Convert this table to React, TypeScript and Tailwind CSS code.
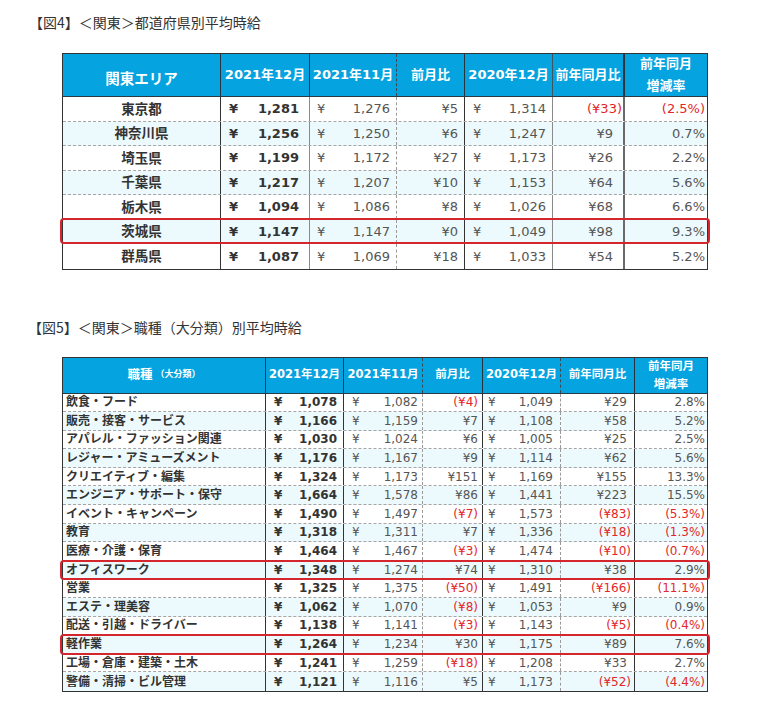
import React from "react";

type Row = {
  name: string;
  a: string;
  b: string;
  c: string;
  d: string;
  e: string;
  f: string;
  hl?: boolean;
};

const t1: Row[] = [
  { name: "東京都", a: "1,281", b: "1,276", c: "¥5", d: "1,314", e: "(¥33)", f: "(2.5%)" },
  { name: "神奈川県", a: "1,256", b: "1,250", c: "¥6", d: "1,247", e: "¥9", f: "0.7%" },
  { name: "埼玉県", a: "1,199", b: "1,172", c: "¥27", d: "1,173", e: "¥26", f: "2.2%" },
  { name: "千葉県", a: "1,217", b: "1,207", c: "¥10", d: "1,153", e: "¥64", f: "5.6%" },
  { name: "栃木県", a: "1,094", b: "1,086", c: "¥8", d: "1,026", e: "¥68", f: "6.6%" },
  { name: "茨城県", a: "1,147", b: "1,147", c: "¥0", d: "1,049", e: "¥98", f: "9.3%", hl: true },
  { name: "群馬県", a: "1,087", b: "1,069", c: "¥18", d: "1,033", e: "¥54", f: "5.2%" },
];

const t2: Row[] = [
  { name: "飲食・フード", a: "1,078", b: "1,082", c: "(¥4)", d: "1,049", e: "¥29", f: "2.8%" },
  { name: "販売・接客・サービス", a: "1,166", b: "1,159", c: "¥7", d: "1,108", e: "¥58", f: "5.2%" },
  { name: "アパレル・ファッション関連", a: "1,030", b: "1,024", c: "¥6", d: "1,005", e: "¥25", f: "2.5%" },
  { name: "レジャー・アミューズメント", a: "1,176", b: "1,167", c: "¥9", d: "1,114", e: "¥62", f: "5.6%" },
  { name: "クリエイティブ・編集", a: "1,324", b: "1,173", c: "¥151", d: "1,169", e: "¥155", f: "13.3%" },
  { name: "エンジニア・サポート・保守", a: "1,664", b: "1,578", c: "¥86", d: "1,441", e: "¥223", f: "15.5%" },
  { name: "イベント・キャンペーン", a: "1,490", b: "1,497", c: "(¥7)", d: "1,573", e: "(¥83)", f: "(5.3%)" },
  { name: "教育", a: "1,318", b: "1,311", c: "¥7", d: "1,336", e: "(¥18)", f: "(1.3%)" },
  { name: "医療・介護・保育", a: "1,464", b: "1,467", c: "(¥3)", d: "1,474", e: "(¥10)", f: "(0.7%)" },
  { name: "オフィスワーク", a: "1,348", b: "1,274", c: "¥74", d: "1,310", e: "¥38", f: "2.9%", hl: true },
  { name: "営業", a: "1,325", b: "1,375", c: "(¥50)", d: "1,491", e: "(¥166)", f: "(11.1%)" },
  { name: "エステ・理美容", a: "1,062", b: "1,070", c: "(¥8)", d: "1,053", e: "¥9", f: "0.9%" },
  { name: "配送・引越・ドライバー", a: "1,138", b: "1,141", c: "(¥3)", d: "1,143", e: "(¥5)", f: "(0.4%)" },
  { name: "軽作業", a: "1,264", b: "1,234", c: "¥30", d: "1,175", e: "¥89", f: "7.6%", hl: true },
  { name: "工場・倉庫・建築・土木", a: "1,241", b: "1,259", c: "(¥18)", d: "1,208", e: "¥33", f: "2.7%" },
  { name: "警備・清掃・ビル管理", a: "1,121", b: "1,116", c: "¥5", d: "1,173", e: "(¥52)", f: "(4.4%)" },
];

const neg = (s: string) => s.startsWith("(");

function Table1() {
  return (
    <div className="ml-[62px] mt-[22px] w-[646px] border border-[#333]">
      <div className="flex h-[43px] border-b border-[#2a3a44] bg-[#05a3df] font-bold text-white">
        <div className="flex w-[158px] items-end justify-center border-r border-[#26343c] pb-[5px] text-[14.5px]">
          関東エリア
        </div>
        <div className="flex w-[89px] items-center justify-center border-r border-[#26343c] text-[13px]">
          2021年12月
        </div>
        <div className="flex w-[87px] items-center justify-center border-r border-dashed border-[#3a4a52] text-[13px]">
          2021年11月
        </div>
        <div className="flex w-[68px] items-center justify-center border-r border-[#26343c] text-[13px]">
          前月比
        </div>
        <div className="flex w-[88px] items-center justify-center border-r border-[#3d5560] text-[13px]">
          2020年12月
        </div>
        <div className="flex w-[72px] items-center justify-center border-r-2 border-[#26343c] text-[13px]">
          前年同月比
        </div>
        <div className="flex w-[82px] flex-col items-center justify-center text-[13px] leading-[22px]">
          <span>前年同月</span>
          <span>増減率</span>
        </div>
      </div>
      {t1.map((r, i) => (
        <div
          key={r.name}
          className={`relative flex h-[24.5px] ${i < t1.length - 1 ? "border-b border-dashed border-[#a5a5a5]" : ""} ${i % 2 === 1 ? "bg-[#ecfafd]" : "bg-white"}`}
        >
          <div className="flex w-[158px] items-center justify-center border-r border-[#333] text-[13.5px] font-bold text-[#333]">
            {r.name}
          </div>
          <div className="flex w-[89px] items-center justify-between border-r border-[#8a8a8a] pl-[8px] pr-[10px] text-[13px] font-bold text-[#333]">
            <span>¥</span>
            <span>{r.a}</span>
          </div>
          <div className="flex w-[87px] items-center justify-between border-r border-dashed border-[#9a9a9a] pl-[7px] pr-[6px] text-[13px] text-[#555]">
            <span>¥</span>
            <span>{r.b}</span>
          </div>
          <div className="flex w-[68px] items-center justify-end border-r border-[#333] pr-[6px] text-[13px] text-[#555]">
            {r.c}
          </div>
          <div className="flex w-[88px] items-center justify-between border-r border-[#8a8a8a] pl-[8px] pr-[6px] text-[13px] text-[#555]">
            <span>¥</span>
            <span>{r.d}</span>
          </div>
          <div
            className={`flex w-[72px] items-center justify-end border-r-2 border-[#6a6a6a] text-[13px] ${neg(r.e) ? "pr-[1px] text-[#e3262a]" : "pr-[10px] text-[#555]"}`}
          >
            {r.e}
          </div>
          <div
            className={`flex w-[82px] items-center justify-end pr-[2px] text-[13px] ${neg(r.f) ? "text-[#e3262a]" : "text-[#555]"}`}
          >
            {r.f}
          </div>
          {r.hl && (
            <div className="pointer-events-none absolute -bottom-[1px] -left-[3px] -right-[3px] -top-[2px] z-10 rounded-[4px] border-2 border-[#d6262d]" />
          )}
        </div>
      ))}
    </div>
  );
}

function Table2() {
  return (
    <div className="ml-[62px] mt-[21px] w-[646px] border border-[#333]">
      <div className="flex h-[36px] border-b border-[#2a3a44] bg-[#05a3df] font-bold text-white">
        <div className="flex w-[203px] items-center justify-center border-r border-[#26343c] text-[12.5px]">
          <span>職種</span>
          <span className="ml-[3px] text-[9px]">（大分類）</span>
        </div>
        <div className="flex w-[78px] items-center justify-center border-r border-[#26343c] text-[11.5px]">
          2021年12月
        </div>
        <div className="flex w-[79px] items-center justify-center border-r border-dashed border-[#3a4a52] text-[11.5px]">
          2021年11月
        </div>
        <div className="flex w-[60px] items-center justify-center border-r border-[#26343c] text-[11.5px]">
          前月比
        </div>
        <div className="flex w-[78px] items-center justify-center border-r border-dashed border-[#3a4a52] text-[11.5px]">
          2020年12月
        </div>
        <div className="flex w-[74px] items-center justify-center border-r border-[#26343c] text-[11.5px]">
          前年同月比
        </div>
        <div className="flex w-[72px] flex-col items-center justify-center text-[11.5px] leading-[18px]">
          <span>前年同月</span>
          <span>増減率</span>
        </div>
      </div>
      {t2.map((r, i) => (
        <div
          key={r.name}
          className={`relative flex h-[18.6px] ${i < t2.length - 1 ? "border-b border-dashed border-[#a5a5a5]" : ""} ${i % 2 === 1 ? "bg-[#ecfafd]" : "bg-white"}`}
        >
          <div className="flex w-[203px] items-center justify-start border-r border-[#333] pl-[3px] text-[12px] font-bold text-[#333]">
            {r.name}
          </div>
          <div className="flex w-[78px] items-center justify-between border-r border-[#333] pl-[8px] pr-[6px] text-[12px] font-bold text-[#333]">
            <span>¥</span>
            <span>{r.a}</span>
          </div>
          <div className="flex w-[79px] items-center justify-between border-r border-dashed border-[#9a9a9a] pl-[8px] pr-[4px] text-[12px] text-[#555]">
            <span>¥</span>
            <span>{r.b}</span>
          </div>
          <div
            className={`flex w-[60px] items-center justify-end border-r border-[#333] pr-[4px] text-[12px] ${neg(r.c) ? "text-[#e3262a]" : "text-[#555]"}`}
          >
            {r.c}
          </div>
          <div className="flex w-[78px] items-center justify-between border-r border-dashed border-[#9a9a9a] pl-[5px] pr-[7px] text-[12px] text-[#555]">
            <span>¥</span>
            <span>{r.d}</span>
          </div>
          <div
            className={`flex w-[74px] items-center justify-end border-r border-[#333] text-[12px] ${neg(r.e) ? "pr-[3px] text-[#e3262a]" : "pr-[7px] text-[#555]"}`}
          >
            {r.e}
          </div>
          <div
            className={`flex w-[72px] items-center justify-end pr-[2px] text-[12px] ${neg(r.f) ? "text-[#e3262a]" : "text-[#555]"}`}
          >
            {r.f}
          </div>
          {r.hl && (
            <div className="pointer-events-none absolute -bottom-[2px] -left-[3px] -right-[3px] -top-[1px] z-10 rounded-[4px] border-2 border-[#d6262d]" />
          )}
        </div>
      ))}
    </div>
  );
}

export default function App() {
  return (
    <div className="h-[712px] w-[775px] overflow-hidden bg-white font-['DejaVu_Sans','Noto_Sans_CJK_JP',sans-serif] text-[#333]">
      <div className="pl-[29px] pt-[13px] font-['Noto_Sans_CJK_JP',sans-serif] text-[14px] leading-[18px] text-[#333]">
        【図4】＜関東＞都道府県別平均時給
      </div>
      <Table1 />
      <div className="mt-[48px] pl-[28px] font-['Noto_Sans_CJK_JP',sans-serif] text-[14px] leading-[18px] text-[#333]">
        【図5】＜関東＞職種（大分類）別平均時給
      </div>
      <Table2 />
    </div>
  );
}
